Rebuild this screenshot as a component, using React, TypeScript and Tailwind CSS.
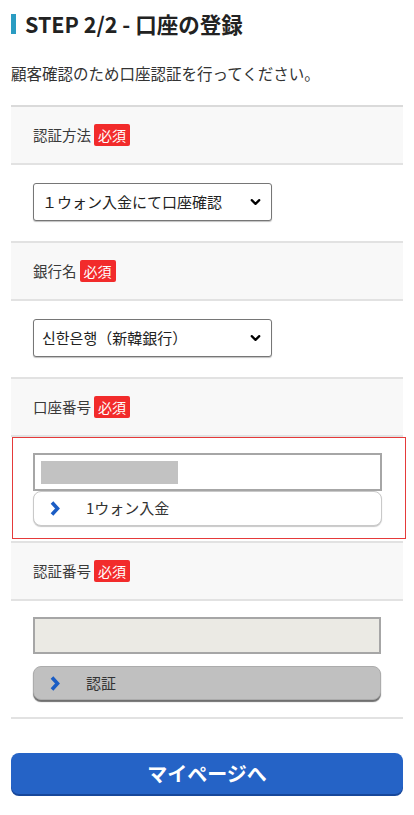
import { ChevronDown } from "lucide-react";

const jp = "font-['Noto_Sans_CJK_JP','Noto_Sans_CJK_KR',sans-serif]";

function Badge() {
  return (
    <span className="ml-[3px] inline-flex h-[22px] items-center rounded-[2px] bg-[#f22b2b] px-[4px] text-[14px] leading-none text-white">
      必須
    </span>
  );
}

function LabelRow({ label }: { label: string }) {
  return (
    <div className="flex h-[58px] items-center border-b-2 border-[#e2e2e2] bg-[#f8f8f8] pl-[22px] text-[14.5px] text-[#3a3a3a]">
      {label}
      <Badge />
    </div>
  );
}

function Arrow() {
  return (
    <svg width="10" height="15" viewBox="0 0 10 15" className="shrink-0">
      <path d="M2 1.5 L7.5 7.5 L2 13.5" fill="none" stroke="#1b5dc4" strokeWidth="3.6" />
    </svg>
  );
}

function FakeSelect({ value }: { value: string }) {
  return (
    <div className="relative flex h-[38px] w-[239px] items-center rounded-[3px] border border-[#767676] bg-white pl-[8px] text-[15px] text-[#222] shadow-[0_1px_1px_rgba(0,0,0,0.25)]">
      {value}
      <ChevronDown className="absolute right-[8px] top-1/2 size-[15px] -translate-y-1/2 text-black" strokeWidth={3.5} />
    </div>
  );
}

export default function App() {
  return (
    <div className={`${jp} min-h-[815px] bg-white px-[11px] pt-[12px] text-[#333]`}>
      {/* Heading */}
      <div className="flex h-[24px] items-center">
        <div className="h-[20px] w-[5px] bg-[#2a9cc2]" />
        <h1 className="ml-[9px] text-[21.5px] font-bold leading-[24px] text-[#222]">STEP 2/2 - 口座の登録</h1>
      </div>
      <p className="mt-[26px] text-[15.5px] leading-[22px] text-[#333]">顧客確認のため口座認証を行ってください。</p>

      {/* Form */}
      <div className="mt-[21px] border-t-2 border-[#dadada]">
        <LabelRow label="認証方法" />
        <div className="border-b-2 border-[#e2e2e2] pb-[20px] pl-[22px] pt-[18px]">
          <FakeSelect value="１ウォン入金にて口座確認" />
        </div>

        <LabelRow label="銀行名" />
        <div className="border-b-2 border-[#e2e2e2] pb-[20px] pl-[22px] pt-[18px]">
          <FakeSelect value="신한은행（新韓銀行）" />
        </div>

        <LabelRow label="口座番号" />
        <div className="border-b-2 border-[#e2e2e2] pb-[2px]">
          <div className="-mr-[3px] ml-[1px] border border-[#e53a3a] pb-[12px] pl-[20px] pr-[23px] pt-[15px]">
            <div className="flex h-[38px] items-center border-2 border-[#a6a6a6] bg-white px-[6px]">
              <div className="h-[23px] w-[137px] bg-[#c2c2c2]" />
            </div>
            <div className="flex h-[35px] items-center rounded-[8px] border border-[#c9c9c9] bg-white pl-[16px] shadow-[0_1px_1px_#c8c8c8]">
              <Arrow />
              <span className="ml-[26px] text-[15px] text-[#333]">1ウォン入金</span>
            </div>
          </div>
        </div>

        <LabelRow label="認証番号" />
        <div className="border-b-2 border-[#e2e2e2] pb-[17px] pl-[22px] pr-[22px] pt-[16px]">
          <div className="h-[37px] border-2 border-[#a6a6a6] bg-[#ebeae4]" />
          <div className="mt-[12px] flex h-[34px] items-center rounded-[8px] border border-[#acacac] bg-[#c0c0c0] pl-[16px] shadow-[0_2px_1px_#6f6f6f]">
            <Arrow />
            <span className="ml-[26px] text-[15px] text-[#333]">認証</span>
          </div>
        </div>
      </div>

      <button
        type="button"
        className="mt-[34px] flex h-[41px] w-full items-center justify-center rounded-[8px] bg-[#2563c6] text-[20px] font-bold text-white shadow-[0_2px_0_#17479a]"
      >
        マイページへ
      </button>
    </div>
  );
}
